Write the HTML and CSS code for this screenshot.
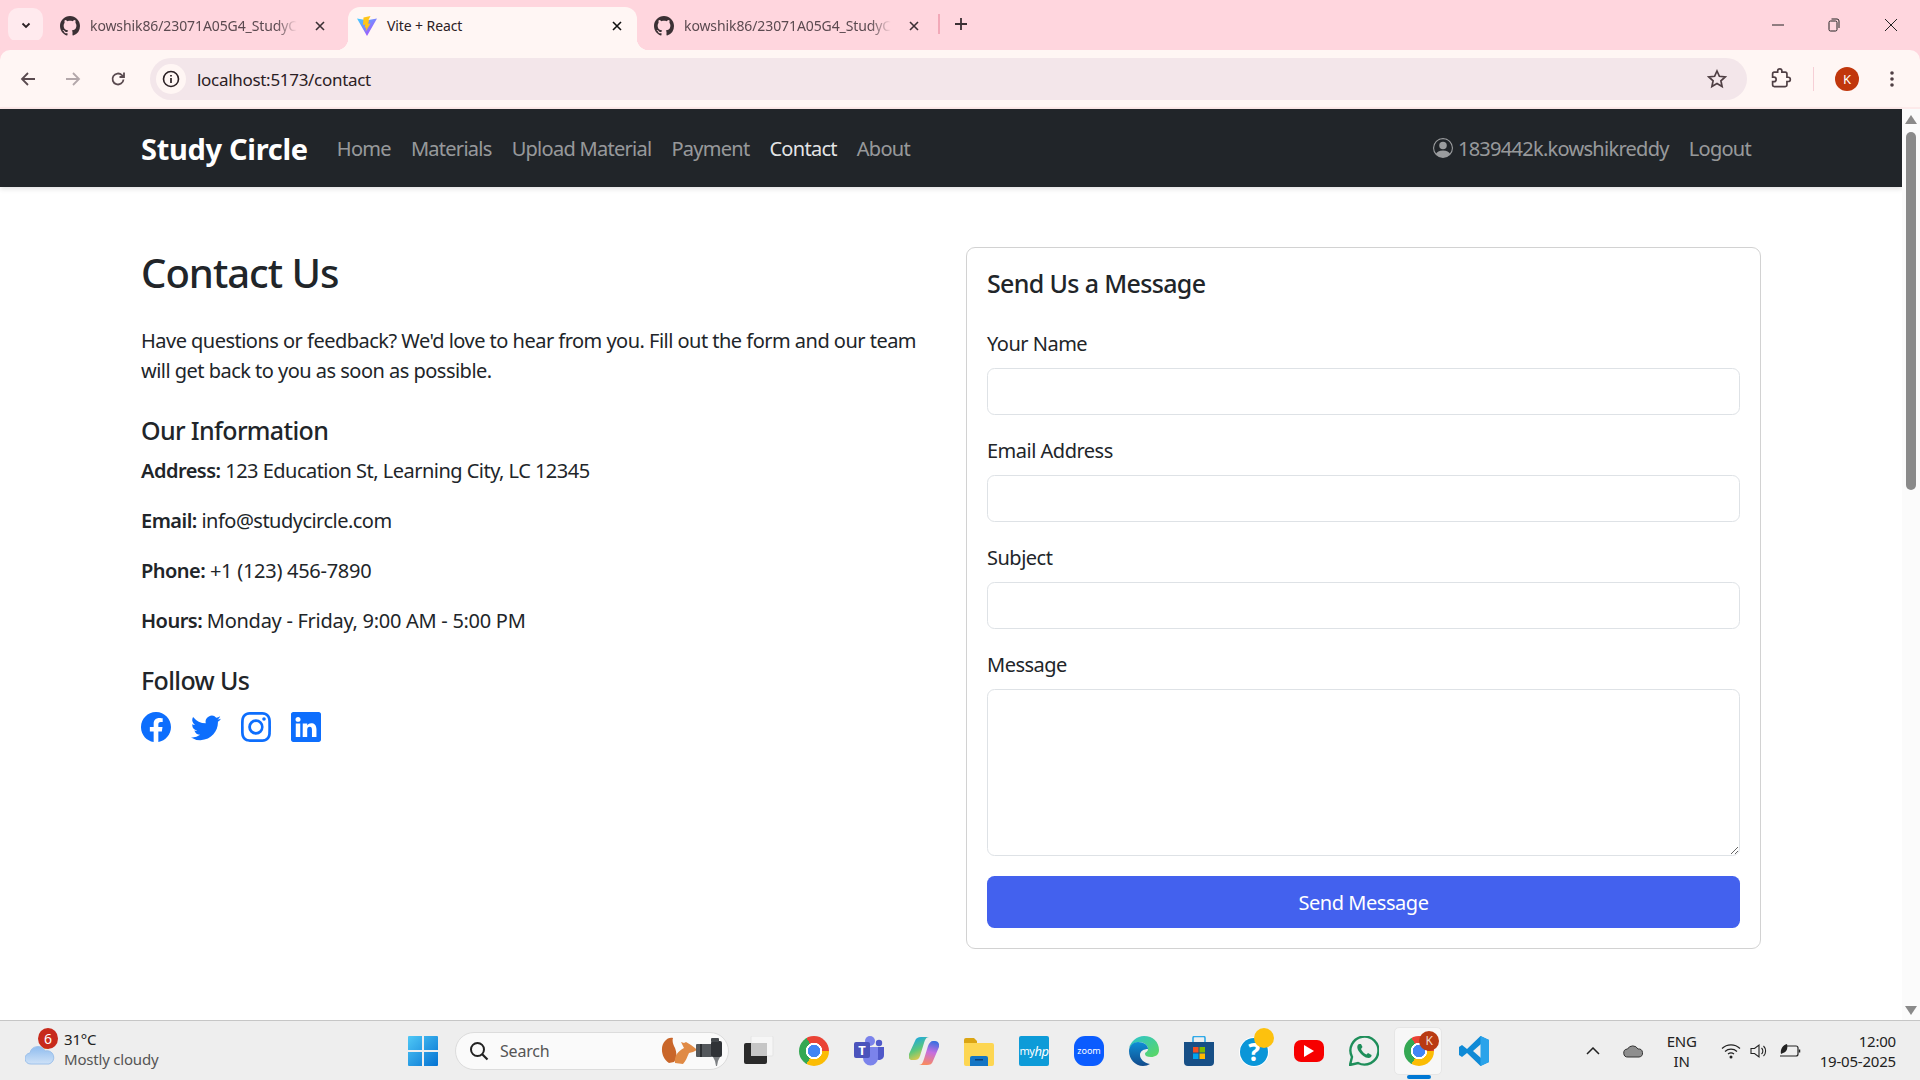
FILE: index.html
```html
<!DOCTYPE html>
<html lang="en">
<head>
    <meta charset="UTF-8">
    <title>Vite + React</title>
    <link rel="stylesheet" href="styles.css">
</head>
<body>
    <svg class="sprite" width="0" height="0">
        <symbol id="github" viewBox="0 0 16 16"><path d="M8 0C3.58 0 0 3.58 0 8c0 3.54 2.29 6.53 5.47 7.59.4.07.55-.17.55-.38 0-.19-.01-.82-.01-1.49-2.01.37-2.53-.49-2.69-.94-.09-.23-.48-.94-.82-1.13-.28-.15-.68-.52-.01-.53.63-.01 1.08.58 1.23.82.72 1.21 1.87.87 2.33.66.07-.52.28-.87.51-1.07-1.78-.2-3.64-.89-3.64-3.95 0-.87.31-1.59.82-2.15-.08-.2-.36-1.02.08-2.12 0 0 .67-.21 2.2.82.64-.18 1.32-.27 2-.27.68 0 1.36.09 2 .27 1.53-1.04 2.2-.82 2.2-.82.44 1.1.16 1.92.08 2.12.51.56.82 1.27.82 2.15 0 3.07-1.87 3.75-3.65 3.95.29.25.54.73.54 1.48 0 1.07-.01 1.93-.01 2.2 0 .21.15.46.55.38A8.013 8.013 0 0016 8c0-4.42-3.58-8-8-8z"/></symbol>
        <symbol id="close" viewBox="0 0 12 12"><path d="M2 2l8 8M10 2l-8 8" fill="none" stroke="currentColor" stroke-width="1.6"/></symbol>
    </svg>

    <!-- browser chrome -->
    <header class="tabstrip">
        <button class="tab-menu"><svg width="12" height="12" viewBox="0 0 12 12"><path d="M2.5 4.5L6 8l3.5-3.5" fill="none" stroke="#2b2024" stroke-width="1.8"/></svg></button>
        <div class="tab">
            <svg class="tab-icon" fill="#3b3034"><use href="#github"/></svg>
            <span class="tab-title fade">kowshik86/23071A05G4_StudyC</span>
            <svg class="tab-close"><use href="#close"/></svg>
        </div>
        <div class="tab active">
            <svg class="tab-icon" viewBox="0 0 20 20">
                <defs><linearGradient id="viteGrad" x1="0" y1="0" x2="1" y2="1"><stop offset="0" stop-color="#41d1ff"/><stop offset="1" stop-color="#bd34fe"/></linearGradient></defs>
                <path d="M0 2.5L10 4.3 20 2.5 10 20z" fill="url(#viteGrad)"/>
                <path d="M13.5 0L6.5 1.5 6 9l2.2-.4-.5 3.2 1.6-.4-.6 4 4.8-8-2.4.4 1-3.6-.6-.2z" fill="#ffc517"/>
            </svg>
            <span class="tab-title">Vite + React</span>
            <svg class="tab-close"><use href="#close"/></svg>
        </div>
        <div class="tab">
            <svg class="tab-icon" fill="#3b3034"><use href="#github"/></svg>
            <span class="tab-title fade">kowshik86/23071A05G4_StudyC</span>
            <svg class="tab-close"><use href="#close"/></svg>
        </div>
        <span class="tab-divider"></span>
        <svg class="new-tab" width="14" height="14" viewBox="0 0 14 14"><path d="M7 1v12M1 7h12" stroke="#3b3034" stroke-width="1.8"/></svg>
        <div class="window-controls">
            <svg width="12" height="12" viewBox="0 0 12 12"><path d="M0 6h12" stroke="#222"/></svg>
            <svg width="12" height="14" viewBox="0 0 12 14"><rect x="1" y="3" width="8" height="10" rx="1.5" fill="none" stroke="#222"/><path d="M3.5 1H9a2 2 0 0 1 2 2v7" fill="none" stroke="#222"/></svg>
            <svg width="14" height="14" viewBox="0 0 14 14"><path d="M1 1l12 12M13 1L1 13" stroke="#222"/></svg>
        </div>
    </header>

    <div class="toolbar">
        <div class="nav-buttons">
            <svg width="18" height="18" viewBox="0 0 18 18"><path d="M16 9H3M9 3L3 9l6 6" fill="none" stroke="#5a4a4f" stroke-width="1.8"/></svg>
            <svg width="18" height="18" viewBox="0 0 18 18"><path d="M2 9h13M9 3l6 6-6 6" fill="none" stroke="#b3a7aa" stroke-width="1.8"/></svg>
            <svg width="18" height="18" viewBox="0 0 18 18"><path d="M14.5 9.5a5.5 5.5 0 1 1-1.6-4.4L15 7M15 2.5V7h-4.5" fill="none" stroke="#5a4a4f" stroke-width="1.8"/></svg>
        </div>
        <div class="omnibox">
            <span class="site-info"><svg width="18" height="18" viewBox="0 0 18 18"><circle cx="9" cy="9" r="7.5" fill="none" stroke="#2b2024" stroke-width="1.6"/><path d="M9 8v5M9 5v1.6" stroke="#2b2024" stroke-width="1.7"/></svg></span>
            <span class="url">localhost:5173/contact</span>
            <svg class="star" width="20" height="20" viewBox="0 0 20 20"><path d="M10 2l2.4 5.3 5.8.6-4.3 3.9 1.2 5.7L10 14.6l-5.1 2.9 1.2-5.7-4.3-3.9 5.8-.6z" fill="none" stroke="#4f3f44" stroke-width="1.7"/></svg>
        </div>
        <svg class="ext" width="22" height="22" viewBox="0 0 24 24"><path d="M20.5 11H19V7c0-1.1-.9-2-2-2h-4V3.5C13 2.12 11.88 1 10.5 1S8 2.12 8 3.5V5H4c-1.1 0-2 .9-2 2v3.8h1.5c1.49 0 2.7 1.21 2.7 2.7s-1.21 2.7-2.7 2.7H2V20c0 1.1.9 2 2 2h13c1.1 0 2-.9 2-2v-4h1.5c1.38 0 2.5-1.12 2.5-2.5S21.88 11 20.5 11z" transform="translate(1 0) scale(.92)" fill="none" stroke="#4f3f44" stroke-width="2"/></svg>
        <span class="toolbar-divider"></span>
        <span class="avatar">K</span>
        <svg class="kebab" width="4" height="18" viewBox="0 0 4 18"><circle cx="2" cy="3" r="1.8" fill="#4f3f44"/><circle cx="2" cy="9" r="1.8" fill="#4f3f44"/><circle cx="2" cy="15" r="1.8" fill="#4f3f44"/></svg>
    </div>

    <div class="viewport">
        <div class="page">
            <nav class="navbar">
                <div class="container nav-inner">
                    <a class="brand">Study Circle</a>
                    <a class="nav-link">Home</a>
                    <a class="nav-link">Materials</a>
                    <a class="nav-link">Upload Material</a>
                    <a class="nav-link">Payment</a>
                    <a class="nav-link current">Contact</a>
                    <a class="nav-link">About</a>
                    <a class="nav-link user">
                        <svg width="20" height="20" viewBox="0 0 16 16" fill="currentColor"><path d="M11 6a3 3 0 1 1-6 0 3 3 0 0 1 6 0z"/><path fill-rule="evenodd" d="M0 8a8 8 0 1 1 16 0A8 8 0 0 1 0 8zm8-7a7 7 0 0 0-5.468 11.37C3.242 11.226 4.805 10 8 10s4.757 1.225 5.468 2.37A7 7 0 0 0 8 1z"/></svg>
                        1839442k.kowshikreddy
                    </a>
                    <a class="nav-link">Logout</a>
                </div>
            </nav>

            <main class="container content">
                <section>
                    <h1>Contact Us</h1>
                    <p class="lead">Have questions or feedback? We'd love to hear from you. Fill out the form and our team will get back to you as soon as possible.</p>
                    <h2>Our Information</h2>
                    <p><strong>Address:</strong> 123 Education St, Learning City, LC 12345</p>
                    <p><strong>Email:</strong> info@studycircle.com</p>
                    <p><strong>Phone:</strong> <span class="loose">+1 (123) 456-7890</span></p>
                    <p><strong>Hours:</strong> <span class="loose">Monday - Friday, 9:00 AM - 5:00 PM</span></p>
                    <h2 class="follow">Follow Us</h2>
                    <div class="socials">
                        <svg viewBox="0 0 16 16"><path d="M16 8.049c0-4.446-3.582-8.05-8-8.05C3.58 0-.002 3.603-.002 8.05c0 4.017 2.926 7.347 6.75 7.951v-5.625h-2.03V8.05H6.75V6.275c0-2.017 1.195-3.131 3.022-3.131.876 0 1.791.157 1.791.157v1.98h-1.009c-.993 0-1.303.621-1.303 1.258v1.51h2.218l-.354 2.326H9.25V16c3.824-.604 6.75-3.934 6.75-7.951z"/></svg>
                        <svg viewBox="0 0 16 16"><path d="M5.026 15c6.038 0 9.341-5.003 9.341-9.334 0-.14 0-.282-.006-.422A6.685 6.685 0 0 0 16 3.542a6.658 6.658 0 0 1-1.889.518 3.301 3.301 0 0 0 1.447-1.817 6.533 6.533 0 0 1-2.087.793A3.286 3.286 0 0 0 7.875 6.03a9.325 9.325 0 0 1-6.767-3.429 3.289 3.289 0 0 0 1.018 4.382A3.323 3.323 0 0 1 .64 6.575v.045a3.288 3.288 0 0 0 2.632 3.218 3.203 3.203 0 0 1-.865.115 3.23 3.23 0 0 1-.614-.057 3.283 3.283 0 0 0 3.067 2.277A6.588 6.588 0 0 1 .78 13.58a6.32 6.32 0 0 1-.78-.045A9.344 9.344 0 0 0 5.026 15z"/></svg>
                        <svg viewBox="0 0 16 16"><path d="M8 0C5.829 0 5.556.01 4.703.048 3.85.088 3.269.222 2.76.42a3.917 3.917 0 0 0-1.417.923A3.927 3.927 0 0 0 .42 2.76C.222 3.268.087 3.85.048 4.7.01 5.555 0 5.827 0 8.001c0 2.172.01 2.444.048 3.297.04.852.174 1.433.372 1.942.205.526.478.972.923 1.417.444.445.89.719 1.416.923.51.198 1.09.333 1.942.372C5.555 15.99 5.827 16 8 16s2.444-.01 3.298-.048c.851-.04 1.434-.174 1.943-.372a3.916 3.916 0 0 0 1.416-.923c.445-.445.718-.891.923-1.417.197-.509.332-1.09.372-1.942C15.99 10.445 16 10.173 16 8s-.01-2.445-.048-3.299c-.04-.851-.175-1.433-.372-1.941a3.926 3.926 0 0 0-.923-1.417A3.911 3.911 0 0 0 13.24.42c-.51-.198-1.092-.333-1.943-.372C10.443.01 10.172 0 7.998 0h.003zm-.717 1.442h.718c2.136 0 2.389.007 3.232.046.78.035 1.204.166 1.486.275.373.145.64.319.92.599.28.28.453.546.598.92.11.281.24.705.275 1.485.039.843.047 1.096.047 3.231s-.008 2.389-.047 3.232c-.035.78-.166 1.203-.275 1.485a2.47 2.47 0 0 1-.599.919c-.28.28-.546.453-.92.598-.28.11-.704.24-1.485.276-.843.038-1.096.047-3.232.047s-2.39-.009-3.233-.047c-.78-.036-1.203-.166-1.485-.276a2.478 2.478 0 0 1-.92-.598 2.48 2.48 0 0 1-.6-.92c-.109-.281-.24-.705-.275-1.485-.038-.843-.046-1.096-.046-3.233 0-2.136.008-2.388.046-3.231.036-.78.166-1.204.276-1.486.145-.373.319-.64.599-.92.28-.28.546-.453.92-.598.282-.11.705-.24 1.485-.276.738-.034 1.024-.044 2.515-.045v.002zm4.988 1.328a.96.96 0 1 0 0 1.92.96.96 0 0 0 0-1.92zm-4.27 1.122a4.109 4.109 0 1 0 0 8.217 4.109 4.109 0 0 0 0-8.217zm0 1.441a2.667 2.667 0 1 1 0 5.334 2.667 2.667 0 0 1 0-5.334z"/></svg>
                        <svg viewBox="0 0 16 16"><path d="M0 1.146C0 .513.526 0 1.175 0h13.65C15.474 0 16 .513 16 1.146v13.708c0 .633-.526 1.146-1.175 1.146H1.175C.526 16 0 15.487 0 14.854V1.146zm4.943 12.248V6.169H2.542v7.225h2.401zm-1.2-8.212c.837 0 1.358-.554 1.358-1.248-.015-.709-.52-1.248-1.342-1.248-.822 0-1.359.54-1.359 1.248 0 .694.521 1.248 1.327 1.248h.016zm4.908 8.212V9.359c0-.216.016-.432.08-.586.173-.431.568-.878 1.232-.878.869 0 1.216.662 1.216 1.634v3.865h2.401V9.25c0-2.22-1.184-3.252-2.764-3.252-1.274 0-1.845.7-2.165 1.193v.025h-.016a5.54 5.54 0 0 1 .016-.025V6.169h-2.4c.03.678 0 7.225 0 7.225h2.4z"/></svg>
                    </div>
                </section>

                <form class="card">
                    <h3>Send Us a Message</h3>
                    <label>Your Name</label>
                    <input type="text">
                    <label>Email Address</label>
                    <input type="email">
                    <label>Subject</label>
                    <input type="text">
                    <label>Message</label>
                    <textarea></textarea>
                    <button type="button" class="send">Send Message</button>
                </form>
            </main>
        </div>
        <div class="scrollbar">
            <span class="arrow up"></span>
            <span class="thumb"></span>
            <span class="arrow down"></span>
        </div>
    </div>

    <!-- windows taskbar -->
    <footer class="taskbar">
        <div class="weather">
            <svg class="cloud" width="30" height="24" viewBox="0 0 30 24">
                <defs><linearGradient id="cloudGrad" x1="0" y1="0" x2="0" y2="1"><stop offset="0" stop-color="#8fbcef"/><stop offset="1" stop-color="#cfe2f7"/></linearGradient></defs>
                <circle cx="21" cy="4" r="4" fill="#e8892b"/>
                <path d="M6 23a5.5 5.5 0 0 1-1-11 8 8 0 0 1 15-2 6.5 6.5 0 0 1 4 13z" fill="url(#cloudGrad)" stroke="#9cc0ea"/>
            </svg>
            <span class="badge">6</span>
            <div class="weather-text">
                <span>31°C</span>
                <span class="muted">Mostly cloudy</span>
            </div>
        </div>

        <svg class="start" width="30" height="30" viewBox="0 0 30 30">
            <defs><linearGradient id="winGrad" x1="0" y1="0" x2="1" y2="1"><stop offset="0" stop-color="#4fc8f6"/><stop offset="1" stop-color="#0472d2"/></linearGradient></defs>
            <path d="M1 0h13v14H0V1a1 1 0 0 1 1-1zM16 0h13a1 1 0 0 1 1 1v13H16zM0 16h14v14H1a1 1 0 0 1-1-1zM16 16h14v13a1 1 0 0 1-1 1H16z" fill="url(#winGrad)"/>
        </svg>

        <div class="searchbox">
            <svg width="20" height="20" viewBox="0 0 20 20"><circle cx="8.5" cy="8.5" r="6.5" fill="none" stroke="#222" stroke-width="2"/><path d="M13 13l5.5 5.5" stroke="#222" stroke-width="2.2"/></svg>
            <span>Search</span>
            <svg class="squirrel" width="64" height="30" viewBox="0 0 64 30">
                <path d="M8 27C0 22-1 10 4 5c2-3 6-4 8-3-1 3 0 6 2 10 2 5 2 11-1 14z" fill="#c9662a"/>
                <path d="M14 27c-1-7 3-12 9-15l-3-6 3 1 2-1 5 3 4 3 2 2-4 2-4 1c-2 4-3 8-6 11z" fill="#e08a45"/>
                <rect x="35" y="8" width="16" height="13" rx="1" fill="#54585c"/>
                <rect x="39" y="8" width="2" height="13" fill="#2d3033"/>
                <rect x="50" y="5" width="11" height="16" rx="2" fill="#2f3236"/>
                <rect x="50" y="2" width="8" height="4" rx="1" fill="#44484c"/>
                <path d="M52 21h7l-2 4-1 5h-1l-1-5z" fill="#7d8083"/>
            </svg>
        </div>

        <div class="task-icons">
            <svg width="30" height="30" viewBox="0 0 30 30">
                <rect x="7" y="0" width="22" height="20" rx="1" fill="#f6f6f6" stroke="#e4e4e4"/>
                <rect x="0" y="7" width="23" height="21" rx="2" fill="#2a2a2a"/>
                <rect x="7" y="7" width="16" height="13" fill="#c6c6c6"/>
            </svg>
            <span class="chrome-icon"></span>
            <svg width="30" height="30" viewBox="0 0 30 30">
                <circle cx="16" cy="5" r="5" fill="#7b83eb"/><circle cx="25" cy="7" r="3.2" fill="#5059c9"/>
                <path d="M21 11h9v8a5 5 0 0 1-9 3z" fill="#5059c9"/>
                <path d="M9 11h15v11a7.5 7.5 0 0 1-15 0z" fill="#7b83eb"/>
                <rect x="0" y="6" width="16" height="16" rx="2" fill="#4b53bc"/>
                <text x="8" y="19" class="icon-label teams-t">T</text>
            </svg>
            <svg width="30" height="30" viewBox="0 0 30 30">
                <defs>
                    <linearGradient id="copA" x1="0.2" y1="0" x2="0.6" y2="1"><stop offset="0" stop-color="#14a5ec"/><stop offset=".55" stop-color="#5ec77a"/><stop offset="1" stop-color="#f6c944"/></linearGradient>
                    <linearGradient id="copB" x1="0.6" y1="0" x2="0.4" y2="1"><stop offset="0" stop-color="#3b6fe0"/><stop offset=".45" stop-color="#c56ee0"/><stop offset="1" stop-color="#f98a5e"/></linearGradient>
                </defs>
                <path d="M12 1h8c-3 0-4 3-5 6l-4 13c-1 3-3 4-5 4H3c-3 0-4-3-3-6L6 5c1-3 3-4 6-4z" fill="url(#copA)"/>
                <path d="M18 29h-8c3 0 4-3 5-6l4-13c1-3 3-5 5-5h2c3 0 5 3 4 6l-6 14c-1 3-3 4-6 4z" fill="url(#copB)"/>
            </svg>
            <svg width="30" height="30" viewBox="0 0 30 30">
                <path d="M0 4a2 2 0 0 1 2-2h8l3 3v3H0z" fill="#dba514"/>
                <path d="M0 7h28a2 2 0 0 1 2 2v19a2 2 0 0 1-2 2H2a2 2 0 0 1-2-2z" fill="#fdd652"/>
                <path d="M6 22a2 2 0 0 1 2-2h14a2 2 0 0 1 2 2v8H6z" fill="#1475c4"/>
                <rect x="11" y="23" width="8" height="1.5" fill="#0c3f74"/>
            </svg>
            <span class="tile myhp">my<em>hp</em></span>
            <span class="tile zoom">zoom</span>
            <svg width="30" height="30" viewBox="0 0 30 30">
                <defs>
                    <linearGradient id="edgeA" x1="0" y1="0" x2="1" y2="1"><stop offset="0" stop-color="#2bc3d2"/><stop offset="1" stop-color="#5ed85e"/></linearGradient>
                    <linearGradient id="edgeB" x1="0" y1="0" x2="0" y2="1"><stop offset="0" stop-color="#0f8fd6"/><stop offset="1" stop-color="#114a8b"/></linearGradient>
                </defs>
                <path d="M15 0c9 0 15 6 15 14 0 5-4 7-8 7-4 0-6-1-6-3 0-2 3-2 3-5 0-4-4-7-9-7-4 0-7 2-10 6C2 5 8 0 15 0z" fill="url(#edgeA)"/>
                <path d="M0 15c0-5 4-9 9-9 6 0 10 3 10 7-4 0-8 2-8 6s4 8 10 9c-2 1-4 2-7 2C6 30 0 23 0 15z" fill="url(#edgeB)"/>
            </svg>
            <svg width="30" height="30" viewBox="0 0 30 30">
                <path d="M9 6V2a1.5 1.5 0 0 1 1.5-1.5h9A1.5 1.5 0 0 1 21 2v4" fill="none" stroke="#2fa9e8" stroke-width="1.6"/>
                <path d="M0 6h30v20a4 4 0 0 1-4 4H4a4 4 0 0 1-4-4z" fill="#174f86"/>
                <rect x="9" y="11" width="5.5" height="5.5" fill="#f25022"/><rect x="15.5" y="11" width="5.5" height="5.5" fill="#7fba00"/>
                <rect x="9" y="17.5" width="5.5" height="5.5" fill="#00a4ef"/><rect x="15.5" y="17.5" width="5.5" height="5.5" fill="#ffb900"/>
            </svg>
            <span class="help-icon"><span class="help-mark">?</span><span class="help-dot"></span></span>
            <span class="tile youtube"><svg width="12" height="14" viewBox="0 0 12 14"><path d="M1 1l10 6-10 6z" fill="#fff"/></svg></span>
            <svg width="30" height="30" viewBox="0 0 30 30">
                <path d="M1 29l2-8A14 14 0 1 1 9 27z" fill="none" stroke="#1e8e5a" stroke-width="2.4"/>
                <path d="M10 8c-2 1-2.5 4 0 7.5s6 6.5 9.5 6.5c2 0 3.5-2 3-3l-3.5-2-1.5 1.5c-2-.5-4.5-3-5.5-5.5L13.5 11 12 8z" fill="#1e8e5a"/>
            </svg>
            <span class="running">
                <span class="chrome-icon"></span>
                <span class="profile-badge">K</span>
                <span class="indicator"></span>
            </span>
            <svg width="30" height="30" viewBox="0 0 30 30">
                <path d="M21.5 0L30 4v22l-8.5 4L8 17l-5 4-3-2V11l3-2 5 4zm.5 8l-8 7 8 7z" fill="#0f8ad6" fill-rule="evenodd"/>
                <path d="M21.5 0L30 4v22l-8.5 4z" fill="#2aa3ea"/>
            </svg>
        </div>

        <div class="tray">
            <svg width="14" height="8" viewBox="0 0 14 8"><path d="M1 7l6-6 6 6" fill="none" stroke="#222" stroke-width="1.5"/></svg>
            <svg class="onedrive" width="21" height="14" viewBox="0 0 21 14"><path d="M5 13a4 4 0 0 1-.5-8A6 6 0 0 1 15 5a4 4 0 0 1 1 8z" fill="#8e8e8e" stroke="#333"/></svg>
            <div class="lang"><span>ENG</span><span>IN</span></div>
            <div class="tray-status">
                <svg width="20" height="16" viewBox="0 0 20 16"><path d="M1 5.5a13 13 0 0 1 18 0M4 8.5a9 9 0 0 1 12 0M7 11a5 5 0 0 1 6 0" fill="none" stroke="#222" stroke-width="1.2"/><circle cx="10" cy="14" r="1.5" fill="#222"/></svg>
                <svg width="20" height="16" viewBox="0 0 20 16"><path d="M1 5.5h3.5L9 2v12l-4.5-3.5H1z" fill="none" stroke="#222" stroke-width="1.1"/><path d="M11.5 5a4 4 0 0 1 0 6M13.5 3a7 7 0 0 1 0 10" fill="none" stroke="#222" stroke-width="1.1"/></svg>
                <svg width="22" height="16" viewBox="0 0 22 16"><path d="M7 3h10a2 2 0 0 1 2 2v6a2 2 0 0 1-2 2H1" fill="none" stroke="#222" stroke-width="1.2"/><path d="M20.5 6.5v3" stroke="#222" stroke-width="1.5"/><path d="M2 11C1 6 4 2 8 1c1 4 0 8-4 9z" fill="#222"/></svg>
            </div>
            <div class="clock"><span>12:00</span><span>19-05-2025</span></div>
        </div>
    </footer>
</body>
</html>
```

FILE: styles.css
```css
* {
    box-sizing: border-box;
}
html, body {
    height: 100%;
}
body {
    margin: 0;
    height: 1080px;
    overflow: hidden;
    display: flex;
    flex-direction: column;
    font-family: "Noto Sans", "Open Sans", sans-serif;
    color: #212529;
    background: #fff;
}
.sprite {
    position: absolute;
}
svg {
    flex-shrink: 0;
    display: block;
}

/* browser chrome */
.tabstrip {
    height: 50px;
    background: #ffd6de;
    display: flex;
    align-items: flex-end;
    padding-left: 8px;
    flex-shrink: 0;
}
.tab-menu {
    width: 35px;
    height: 34px;
    margin: 0 8px 8px 0;
    border: none;
    border-radius: 10px;
    background: #ffeaee;
    display: flex;
    align-items: center;
    justify-content: center;
    padding: 0;
}
.tab {
    width: 289px;
    height: 43px;
    margin-right: 8px;
    padding: 0 14px 6px 9px;
    display: flex;
    align-items: center;
    position: relative;
    color: #5b4a50;
    font-size: 14px;
}
.tab.active {
    background: #fff6f4;
    border-radius: 12px 12px 0 0;
    color: #2b2024;
}
.tab.active::before,
.tab.active::after {
    content: "";
    position: absolute;
    bottom: 0;
    width: 12px;
    height: 12px;
}
.tab.active::before {
    left: -12px;
    background: radial-gradient(circle at 0 0, transparent 12px, #fff6f4 12.5px);
}
.tab.active::after {
    right: -12px;
    background: radial-gradient(circle at 100% 0, transparent 12px, #fff6f4 12.5px);
}
.tab-icon {
    width: 20px;
    height: 20px;
    margin-right: 10px;
}
.tab-title {
    white-space: nowrap;
    letter-spacing: -0.1px;
}
.tab-title.fade {
    -webkit-mask-image: linear-gradient(to right, #000 90%, transparent 100%);
    mask-image: linear-gradient(to right, #000 90%, transparent 100%);
}
.tab-close {
    width: 12px;
    height: 12px;
    margin-left: auto;
    color: #3b3034;
}
.tab.active .tab-close {
    color: #111;
}
.tab-divider {
    width: 2px;
    height: 20px;
    margin: 0 0 16px -4px;
    background: #f2a9b8;
}
.new-tab {
    margin: 0 0 19px 14px;
}
.window-controls {
    margin-left: auto;
    height: 100%;
    display: flex;
    align-items: center;
    gap: 44px;
    padding-right: 22px;
}
.toolbar {
    height: 59px;
    flex-shrink: 0;
    background: #fff6f4;
    border-bottom: 2px solid #fdeaea;
    border-radius: 10px 10px 0 0;
    display: flex;
    align-items: center;
    box-shadow: 0 -10px 0 #ffd6de;
    padding: 1px 23px 0 19px;
}
.nav-buttons {
    display: flex;
    gap: 27px;
    margin-right: 23px;
}
.omnibox {
    width: 1597px;
    height: 42px;
    border-radius: 21px;
    background: #f3e6ea;
    display: flex;
    align-items: center;
    padding: 0 20px 0 6px;
}
.site-info {
    width: 30px;
    height: 30px;
    border-radius: 50%;
    background: #fff6f4;
    display: flex;
    align-items: center;
    justify-content: center;
    margin-right: 11px;
}
.url {
    flex: 1;
    font-size: 17px;
    letter-spacing: -0.3px;
    color: #2b2024;
}
.ext {
    margin-left: 23px;
}
.toolbar-divider {
    width: 1px;
    height: 24px;
    background: #f6cfd6;
    margin: 0 21px;
}
.avatar {
    width: 24px;
    height: 24px;
    border-radius: 50%;
    background: #c1370c;
    color: #fff;
    font-size: 13px;
    display: flex;
    align-items: center;
    justify-content: center;
    margin-right: 31px;
}

/* page */
.viewport {
    flex: 1;
    min-height: 0;
    display: flex;
}
.page {
    flex: 1;
    min-width: 0;
}
.scrollbar {
    width: 18px;
    background: #fbfbfb;
    display: flex;
    flex-direction: column;
    align-items: center;
    padding: 6px 0 5px;
}
.arrow {
    width: 0;
    height: 0;
    border-left: 6px solid transparent;
    border-right: 6px solid transparent;
}
.arrow.up {
    border-bottom: 9px solid #8a8a8a;
}
.arrow.down {
    border-top: 9px solid #8a8a8a;
    margin-top: auto;
}
.thumb {
    width: 10px;
    height: 358px;
    margin-top: 8px;
    border-radius: 5px;
    background: #8a8a8a;
}
.container {
    width: 1650px;
    margin: 0 auto;
    padding: 0 15px;
}
.navbar {
    height: 78px;
    background: #212529;
    box-shadow: 0 2px 5px rgba(0, 0, 0, 0.12);
}
.nav-inner {
    height: 100%;
    display: flex;
    align-items: center;
}
.brand {
    font-size: 29px;
    font-weight: 700;
    letter-spacing: -0.3px;
    color: #fff;
    margin-right: 19px;
}
.nav-link {
    padding: 0 10px;
    font-size: 20px;
    letter-spacing: -0.72px;
    color: rgba(255, 255, 255, 0.55);
    white-space: nowrap;
}
.nav-link.current {
    color: rgba(255, 255, 255, 0.9);
}
.nav-link.user {
    margin-left: auto;
    display: flex;
    align-items: center;
    gap: 5px;
}
.content {
    margin-top: 60px;
    display: grid;
    grid-template-columns: 1fr 1fr;
    column-gap: 30px;
    align-items: start;
    font-size: 20px;
    line-height: 30px;
}
h1 {
    margin: 2px 0 29px;
    font-size: 40px;
    line-height: 48px;
    font-weight: 500;
    letter-spacing: -1px;
}
h2, h3 {
    margin: 0 0 11px;
    font-size: 25px;
    line-height: 30px;
    font-weight: 500;
    letter-spacing: -0.65px;
}
p {
    margin: 0 0 20px;
    letter-spacing: -0.52px;
}
p.lead {
    margin-bottom: 29px;
}
.loose {
    letter-spacing: -0.28px;
}
strong {
    font-weight: 600;
}
h2.follow {
    margin: 29px 0 17px;
}
.socials {
    display: flex;
    gap: 20px;
}
.socials svg {
    width: 30px;
    height: 30px;
    fill: #0d6efd;
}
.card {
    border: 1px solid #d2d2d2;
    border-radius: 9px;
    padding: 20px;
    display: flex;
    flex-direction: column;
    background: #fff;
}
h3 {
    margin-bottom: 30px;
}
label {
    padding-top: 1px;
    margin-bottom: 9px;
    letter-spacing: -0.5px;
}
input, textarea {
    display: block;
    width: 100%;
    height: 47px;
    margin: 0 0 20px;
    border: 1px solid #dee2e6;
    border-radius: 7.5px;
    font: inherit;
    background: #fff;
}
textarea {
    height: 167px;
}
.send {
    height: 52px;
    padding-top: 3px;
    border: none;
    border-radius: 7.5px;
    background: #4361ee;
    color: #fff;
    font: inherit;
    letter-spacing: -0.45px;
}

/* windows taskbar */
.taskbar {
    height: 60px;
    flex-shrink: 0;
    background: #eeeeee;
    border-top: 1px solid #c6c6c6;
    display: flex;
    align-items: center;
    padding-left: 25px;
    font-size: 15px;
    letter-spacing: -0.2px;
    color: #222;
}
.weather {
    width: 383px;
    display: flex;
    position: relative;
    height: 100%;
    align-items: center;
}
.cloud {
    margin-top: 5px;
}
.badge {
    position: absolute;
    left: 13px;
    top: 7px;
    width: 20px;
    height: 21px;
    border-radius: 50%;
    background: #c72a1c;
    color: #fff;
    font-size: 14px;
    line-height: 21px;
    text-align: center;
}
.weather-text {
    display: flex;
    flex-direction: column;
    margin: -3px 0 0 9px;
    line-height: 20px;
}
.muted {
    color: #555;
}
.start {
    margin-right: 17px;
}
.searchbox {
    width: 274px;
    height: 38px;
    border-radius: 19px;
    background: #fafafa;
    border: 1px solid #dcdcdc;
    display: flex;
    align-items: center;
    padding: 0 3px 0 13px;
    font-size: 16px;
    color: #555;
    margin-right: 15px;
}
.searchbox span {
    flex: 1;
    margin-left: 11px;
}
.task-icons {
    display: flex;
    gap: 25px;
    align-items: center;
}
.chrome-icon {
    display: block;
    width: 30px;
    height: 30px;
    border-radius: 50%;
    background:
        radial-gradient(circle, #4285f4 0 6px, #fff 6.5px 8px, transparent 8.5px),
        conic-gradient(from 330deg, #ea4335 0 120deg, #fbbc04 0 240deg, #34a853 0);
}
.icon-label {
    font-family: "Noto Sans", sans-serif;
    text-anchor: middle;
}
.teams-t {
    font-size: 13px;
    font-weight: 700;
    fill: #fff;
}
.tile {
    width: 30px;
    height: 30px;
    display: flex;
    align-items: center;
    justify-content: center;
    color: #fff;
}
.myhp {
    background: #0d9bd8;
    border-radius: 2px;
    font-size: 11px;
    letter-spacing: -0.5px;
}
.myhp em {
    font-size: 13px;
}
.zoom {
    background: #0b5cff;
    border-radius: 11px;
    font-size: 9px;
    letter-spacing: 0;
}
.youtube {
    background: #f70000;
    border-radius: 7px;
    height: 22px;
}
.help-icon {
    width: 28px;
    height: 28px;
    margin: 2px 1px 0;
    border-radius: 50%;
    background: #0a96d8;
    box-shadow: 0 0 0 1px #fff;
    color: #fff;
    font-size: 24px;
    font-weight: 800;
    line-height: 28px;
    text-align: center;
    position: relative;
    display: block;
}
.help-dot {
    position: absolute;
    left: 14px;
    top: -10px;
    width: 20px;
    height: 20px;
    border-radius: 50%;
    background: #fdc10e;
}
.running {
    position: relative;
    display: block;
}
.running::before {
    content: "";
    position: absolute;
    inset: -9px -8px -9px -10px;
    background: #f7f7f7;
    border: 1px solid #e6e6e6;
    border-radius: 5px;
}
.running .chrome-icon {
    position: relative;
}
.profile-badge {
    position: absolute;
    left: 15px;
    top: -5px;
    width: 20px;
    height: 20px;
    border-radius: 50%;
    background: #b93a12;
    color: #f3d7c8;
    font-size: 12px;
    line-height: 20px;
    text-align: center;
}
.indicator {
    position: absolute;
    left: 3px;
    bottom: -13px;
    width: 24px;
    height: 4px;
    border-radius: 2px;
    background: #0078d4;
}
.tray {
    margin-left: auto;
    display: flex;
    align-items: center;
    padding-right: 24px;
}
.onedrive {
    margin-left: 23px;
}
.lang {
    display: flex;
    flex-direction: column;
    align-items: center;
    line-height: 20px;
    margin-left: 23px;
}
.tray-status {
    display: flex;
    gap: 9px;
    align-items: center;
    margin-left: 24px;
}
.clock {
    display: flex;
    flex-direction: column;
    align-items: flex-end;
    line-height: 20px;
    margin-left: 19px;
}
```
